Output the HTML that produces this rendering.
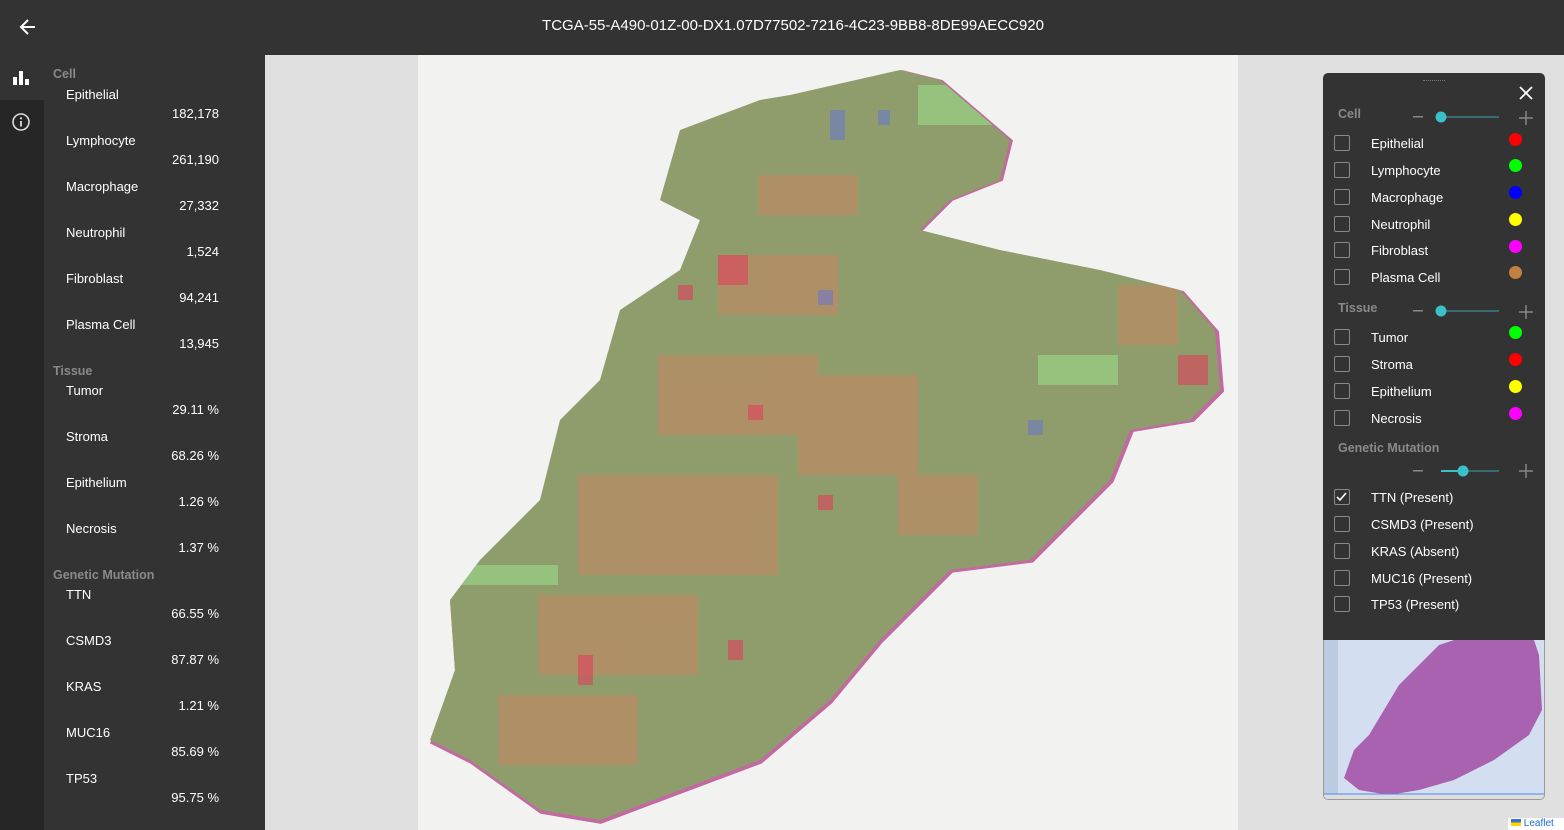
<!DOCTYPE html>
<html><head><meta charset="utf-8"><style>
*{margin:0;padding:0;box-sizing:border-box}
body{width:1564px;height:830px;overflow:hidden;background:#e0e0e0;font-family:"Liberation Sans",sans-serif;position:relative}
.top{position:absolute;left:0;top:0;width:1564px;height:55px;background:#333;color:#fff;font-size:15px}
.top .t{position:absolute;left:0;right:0;top:17px;text-align:center;padding-left:22px}
.rail{position:absolute;left:0;top:55px;width:44px;height:775px;background:#262626}
.rail .a{position:absolute;left:0;top:0;width:44px;height:45px;background:#333}
.side{position:absolute;left:44px;top:55px;width:221px;height:775px;background:#333;color:#fff;font-size:13px}
.side .h{position:absolute;left:9px;color:#8a8a8a;font-size:12.5px;font-weight:bold}
.side .n{position:absolute;left:22px}
.side .v{position:absolute;right:46px}
.panel{position:absolute;left:1323px;top:73px;width:222px;height:567px;background:#333;border-radius:5px 5px 0 0;color:#fff;font-size:13px}
.panel .h{position:absolute;left:15px;color:#8a8a8a;font-size:12.5px;font-weight:bold}
.cb{position:absolute;left:11px;width:16px;height:16px;border:1.5px solid #888;border-radius:2px}
.lb{position:absolute;left:48px}
.dot{position:absolute;left:186px;width:13px;height:13px;border-radius:50%}
.sl{position:absolute;left:88px;width:90px;height:16px}
.mini{position:absolute;left:1323px;top:640px;width:222px;height:160px;background:#d3dff0;border:1px solid #999;border-top:none;border-radius:0 0 5px 5px;overflow:hidden}
</style></head><body>
<div class="top">
<svg style="position:absolute;left:18px;top:17px" width="20" height="20" viewBox="0 0 20 20"><path d="M17 10H4M10 3L3 10l7 7" stroke="#fff" stroke-width="2" fill="none"/></svg>
<div class="t">TCGA-55-A490-01Z-00-DX1.07D77502-7216-4C23-9BB8-8DE99AECC920</div></div>
<div class="rail"><div class="a"></div>
<svg style="position:absolute;left:12px;top:15px" width="18" height="16"><rect x="1" y="7" width="4" height="8" fill="#fff"/><rect x="7" y="1" width="4" height="14" fill="#fff"/><rect x="13" y="9" width="4" height="6" fill="#fff"/></svg>
<svg style="position:absolute;left:11px;top:57px" width="20" height="20"><circle cx="10" cy="10" r="8" stroke="#ddd" stroke-width="1.6" fill="none"/><rect x="9.1" y="9" width="1.8" height="5.5" fill="#ddd"/><circle cx="10" cy="6.3" r="1.1" fill="#ddd"/></svg>
</div>
<div class="side">
<div class="h" style="top:12px">Cell</div>
<div class="n" style="top:32px">Epithelial</div><div class="v" style="top:51px">182,178</div>
<div class="n" style="top:78px">Lymphocyte</div><div class="v" style="top:97px">261,190</div>
<div class="n" style="top:124px">Macrophage</div><div class="v" style="top:143px">27,332</div>
<div class="n" style="top:170px">Neutrophil</div><div class="v" style="top:189px">1,524</div>
<div class="n" style="top:216px">Fibroblast</div><div class="v" style="top:235px">94,241</div>
<div class="n" style="top:262px">Plasma Cell</div><div class="v" style="top:281px">13,945</div>
<div class="h" style="top:309px">Tissue</div>
<div class="n" style="top:328px">Tumor</div><div class="v" style="top:347px">29.11 %</div>
<div class="n" style="top:374px">Stroma</div><div class="v" style="top:393px">68.26 %</div>
<div class="n" style="top:420px">Epithelium</div><div class="v" style="top:439px">1.26 %</div>
<div class="n" style="top:466px">Necrosis</div><div class="v" style="top:485px">1.37 %</div>
<div class="h" style="top:513px">Genetic Mutation</div>
<div class="n" style="top:532px">TTN</div><div class="v" style="top:551px">66.55 %</div>
<div class="n" style="top:578px">CSMD3</div><div class="v" style="top:597px">87.87 %</div>
<div class="n" style="top:624px">KRAS</div><div class="v" style="top:643px">1.21 %</div>
<div class="n" style="top:670px">MUC16</div><div class="v" style="top:689px">85.69 %</div>
<div class="n" style="top:716px">TP53</div><div class="v" style="top:735px">95.75 %</div>
</div>
<svg style="position:absolute;left:418px;top:55px" width="820" height="775">
<rect width="820" height="775" fill="#f2f2f0"/>
<defs><clipPath id="c"><polygon id="p" points="372,40 482,15 522,25 592,85 582,125 532,145 502,175 582,195 682,215 762,235 797,275 802,335 772,365 712,375 692,425 612,505 532,515 462,585 412,645 342,705 262,735 182,765 122,755 52,705 12,685 37,615 32,545 62,505 122,445 142,365 182,325 202,255 262,215 282,165 242,145 262,75 342,45"/></clipPath></defs>
<use href="#p" fill="#c06aa0" transform="scale(1.005)"/>
<g clip-path="url(#c)">
<rect width="820" height="775" fill="#8f9d6c"/>
<g fill="#d48060" opacity=".45">
<rect x="300" y="200" width="120" height="60"/><rect x="240" y="300" width="160" height="80"/><rect x="380" y="320" width="120" height="100"/><rect x="160" y="420" width="200" height="100"/><rect x="120" y="540" width="160" height="80"/><rect x="80" y="640" width="140" height="70"/><rect x="480" y="420" width="80" height="60"/><rect x="700" y="230" width="60" height="60"/><rect x="340" y="120" width="100" height="40"/></g>
<g fill="#e0405a" opacity=".6"><rect x="300" y="200" width="30" height="30"/><rect x="330" y="350" width="15" height="15"/><rect x="160" y="600" width="15" height="30"/><rect x="310" y="585" width="15" height="20"/><rect x="760" y="300" width="30" height="30"/><rect x="260" y="230" width="15" height="15"/><rect x="400" y="440" width="15" height="15"/></g>
<g fill="#6a78c8" opacity=".6"><rect x="412" y="55" width="15" height="30"/><rect x="460" y="55" width="12" height="15"/><rect x="400" y="235" width="15" height="15"/><rect x="610" y="365" width="15" height="15"/></g>
<g fill="#9ef090" opacity=".45"><rect x="40" y="510" width="100" height="20"/><rect x="500" y="30" width="80" height="40"/><rect x="620" y="300" width="80" height="30"/></g>
</g></svg>
<div class="panel">
<div style="position:absolute;left:100px;top:7px;width:22px;height:3px;border-top:1px dotted #777"></div>
<svg style="position:absolute;left:196px;top:13px" width="14" height="14"><path d="M1 1L13 13M13 1L1 13" stroke="#fff" stroke-width="1.8"/></svg>
<div class="h" style="top:34px">Cell</div>
<svg class="sl" style="top:36px" viewBox="0 0 90 16" width="90"><rect x="2" y="7" width="10" height="1.5" fill="#888"/><line x1="30" y1="8" x2="88" y2="8" stroke="#3a7e84" stroke-width="1.5"/><circle cx="30" cy="8" r="5.5" fill="#3bbfc8"/></svg>
<svg style="position:absolute;left:196px;top:38px" width="14" height="14"><path d="M7 0V14M0 7H14" stroke="#888" stroke-width="1.5"/></svg>
<div class="cb" style="top:62px"></div><div class="lb" style="top:63px">Epithelial</div><div class="dot" style="top:60px;background:#f00"></div>
<div class="cb" style="top:89px"></div><div class="lb" style="top:90px">Lymphocyte</div><div class="dot" style="top:86px;background:#0f0"></div>
<div class="cb" style="top:116px"></div><div class="lb" style="top:117px">Macrophage</div><div class="dot" style="top:113px;background:#00f"></div>
<div class="cb" style="top:143px"></div><div class="lb" style="top:144px">Neutrophil</div><div class="dot" style="top:140px;background:#ff0"></div>
<div class="cb" style="top:169px"></div><div class="lb" style="top:170px">Fibroblast</div><div class="dot" style="top:167px;background:#f0f"></div>
<div class="cb" style="top:196px"></div><div class="lb" style="top:197px">Plasma Cell</div><div class="dot" style="top:193px;background:#c48040"></div>
<div class="h" style="top:228px">Tissue</div>
<svg class="sl" style="top:230px" viewBox="0 0 90 16" width="90"><rect x="2" y="7" width="10" height="1.5" fill="#888"/><line x1="30" y1="8" x2="88" y2="8" stroke="#3a7e84" stroke-width="1.5"/><circle cx="30" cy="8" r="5.5" fill="#3bbfc8"/></svg>
<svg style="position:absolute;left:196px;top:232px" width="14" height="14"><path d="M7 0V14M0 7H14" stroke="#888" stroke-width="1.5"/></svg>
<div class="cb" style="top:256px"></div><div class="lb" style="top:257px">Tumor</div><div class="dot" style="top:253px;background:#0f0"></div>
<div class="cb" style="top:283px"></div><div class="lb" style="top:284px">Stroma</div><div class="dot" style="top:280px;background:#f00"></div>
<div class="cb" style="top:310px"></div><div class="lb" style="top:311px">Epithelium</div><div class="dot" style="top:307px;background:#ff0"></div>
<div class="cb" style="top:337px"></div><div class="lb" style="top:338px">Necrosis</div><div class="dot" style="top:334px;background:#f0f"></div>
<div class="h" style="top:368px">Genetic Mutation</div>
<svg class="sl" style="top:390px" viewBox="0 0 90 16" width="90"><rect x="2" y="7" width="10" height="1.5" fill="#888"/><line x1="30" y1="8" x2="88" y2="8" stroke="#3a7e84" stroke-width="1.5"/><line x1="30" y1="8" x2="52" y2="8" stroke="#3bbfc8" stroke-width="2"/><circle cx="52" cy="8" r="5.5" fill="#3bbfc8"/></svg>
<svg style="position:absolute;left:196px;top:391px" width="14" height="14"><path d="M7 0V14M0 7H14" stroke="#888" stroke-width="1.5"/></svg>
<div class="cb" style="top:416px"><svg width="13" height="13" style="position:absolute;left:0;top:0"><path d="M2 7l3 3 6-7" stroke="#fff" stroke-width="1.6" fill="none"/></svg></div><div class="lb" style="top:417px">TTN (Present)</div>
<div class="cb" style="top:443px"></div><div class="lb" style="top:444px">CSMD3 (Present)</div>
<div class="cb" style="top:470px"></div><div class="lb" style="top:471px">KRAS (Absent)</div>
<div class="cb" style="top:497px"></div><div class="lb" style="top:498px">MUC16 (Present)</div>
<div class="cb" style="top:523px"></div><div class="lb" style="top:524px">TP53 (Present)</div>
</div>
<div class="mini"><svg width="222" height="160"><rect x="0" y="0" width="14" height="160" fill="#bccbe0"/><polygon points="130,0 210,0 215,15 218,70 205,95 170,120 130,140 95,150 65,155 35,150 20,138 30,110 45,95 60,70 75,45 95,25 115,5" fill="#a862b0"/><rect x="0" y="154" width="222" height="6" fill="#ddd"/><line x1="0" y1="154" x2="222" y2="154" stroke="#4a8cf0"/></svg></div>
<div style="position:absolute;left:1508px;top:818px;width:56px;height:12px;background:#fff;font-size:10px;color:#1a6cc8;padding-left:3px"><span style="display:inline-block;width:10px;height:7px;background:linear-gradient(#3b6fd1 50%,#ffd500 50%)"></span> Leaflet</div>
</body></html>
